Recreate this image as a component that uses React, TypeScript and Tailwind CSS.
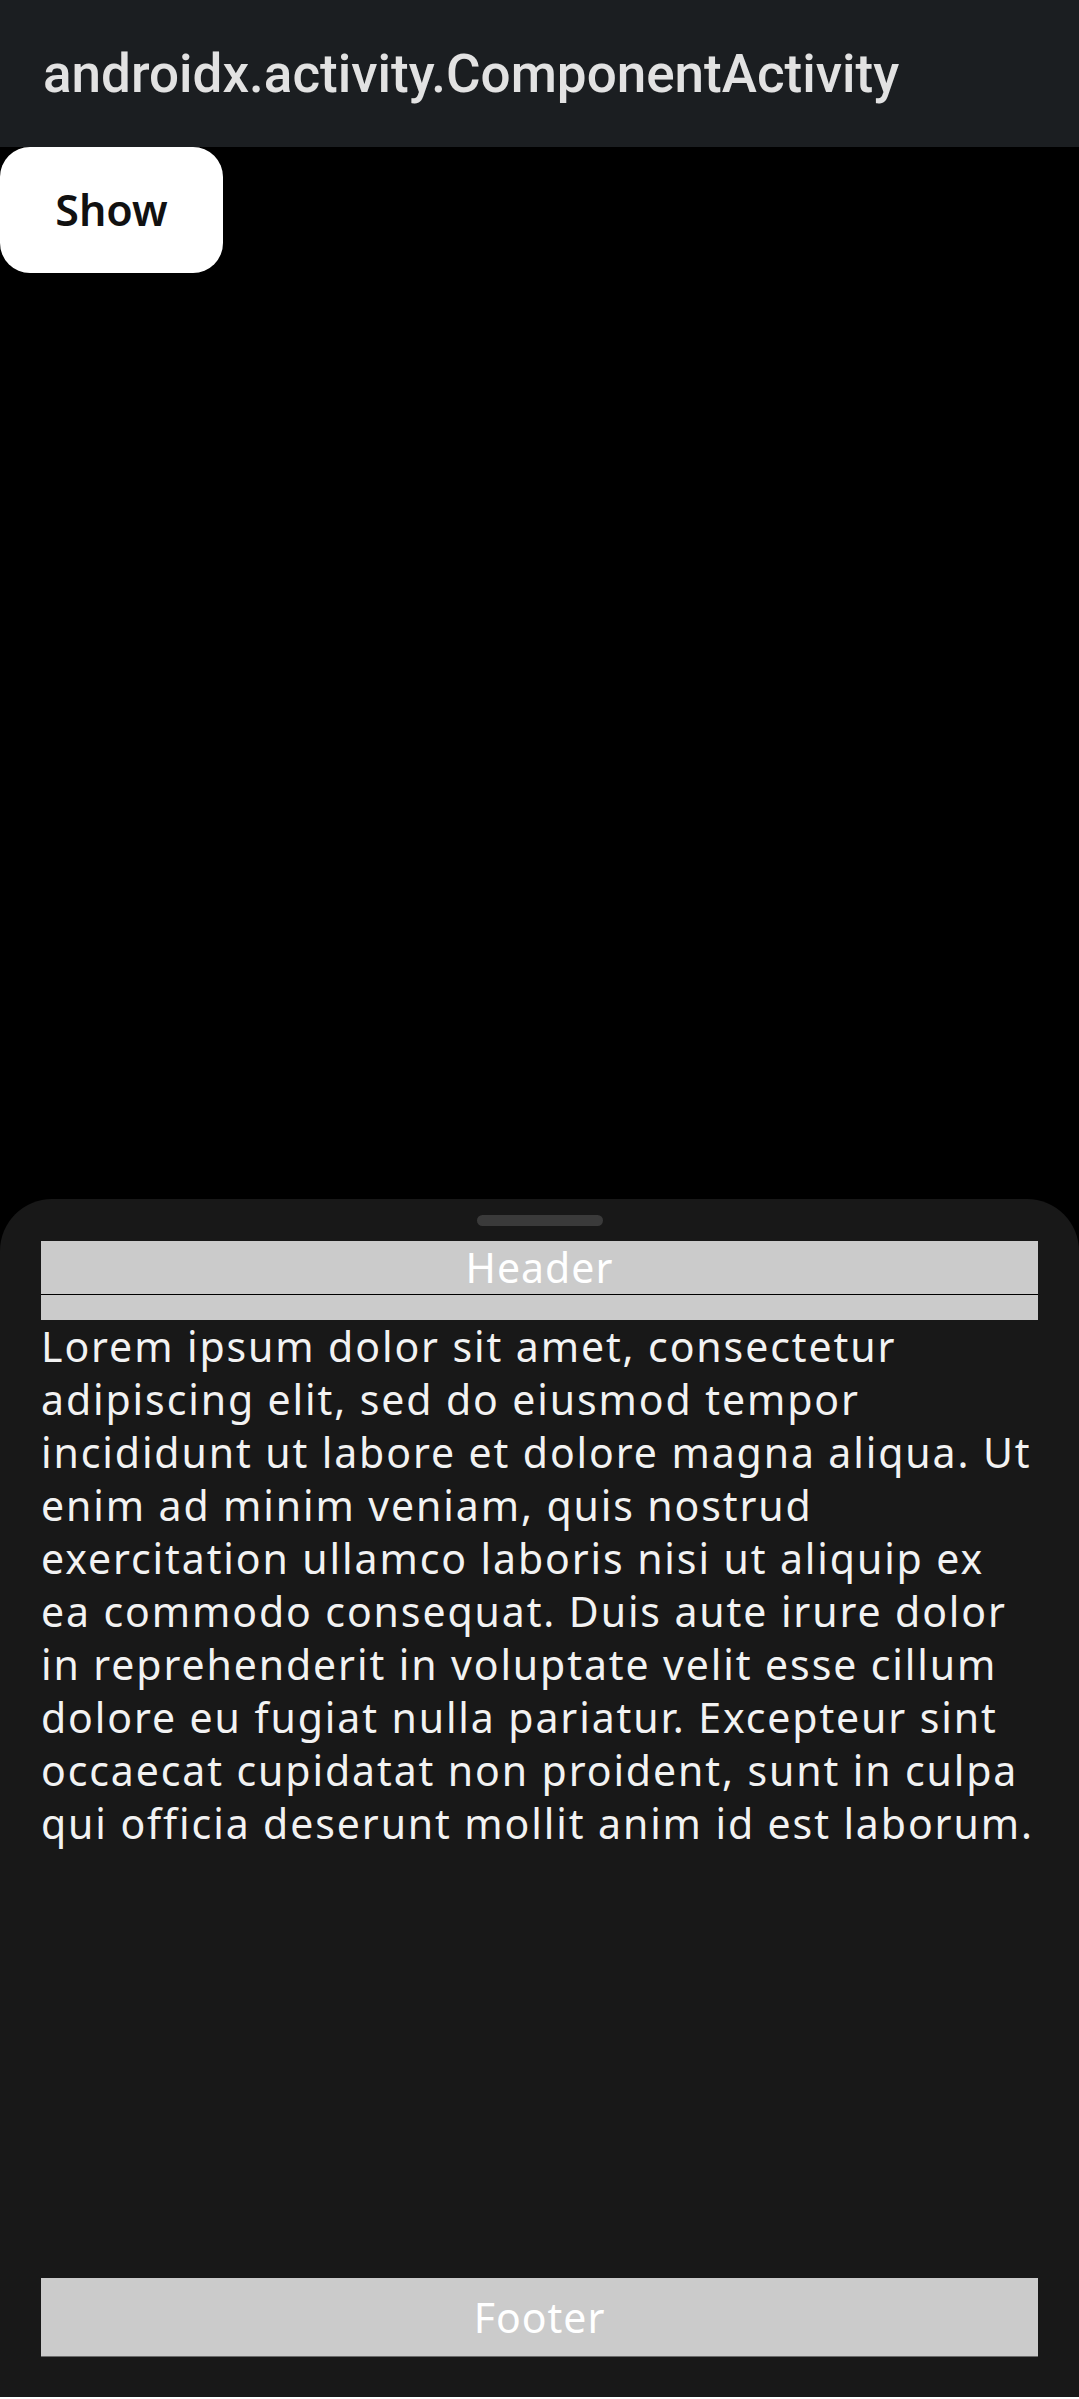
const LOREM =
  'Lorem ipsum dolor sit amet, consectetur adipiscing elit, sed do eiusmod tempor incididunt ut labore et dolore magna aliqua. Ut enim ad minim veniam, quis nostrud exercitation ullamco laboris nisi ut aliquip ex ea commodo consequat. Duis aute irure dolor in reprehenderit in voluptate velit esse cillum dolore eu fugiat nulla pariatur. Excepteur sint occaecat cupidatat non proident, sunt in culpa qui officia deserunt mollit anim id est laborum.';

export default function App() {
  return (
    <div className="w-[1079px] h-[2397px] flex flex-col bg-black font-['Noto_Sans',sans-serif]">
      {/* Toolbar */}
      <header className="h-[147px] shrink-0 bg-[#1b1e21] flex items-center px-[43px]">
        <h1 className="font-['Roboto',sans-serif] font-medium text-[53px] text-[#e2e2e2] leading-none pt-[2px]">
          androidx.activity.ComponentActivity
        </h1>
      </header>

      {/* Content */}
      <div className="flex-1 flex flex-col items-start">
        <button className="w-[223px] h-[126px] bg-white rounded-[30px] flex items-center justify-center text-[43px] font-semibold text-[#111] leading-none pb-[2px]">
          Show
        </button>
      </div>

      {/* Bottom sheet */}
      <section className="h-[1198px] shrink-0 bg-[#181818] rounded-t-[52px] flex flex-col items-center px-[41px] pb-[40px]">
        <div className="mt-[16px] w-[126px] h-[11px] rounded-full bg-[#3a3a3a]" />

        <div className="mt-[15px] w-full flex flex-col">
          <div className="h-[53px] bg-[#cbcbcb] flex items-center justify-center text-white text-[41px] tracking-[1px] leading-none">
            Header
          </div>
          <div className="h-px bg-black" />
          <div className="h-[25px] bg-[#cbcbcb]" />
        </div>

        <p className="w-full text-[41px] leading-[53px] tracking-[1.9px] text-[#f2f2f2]">{LOREM}</p>

        <div className="flex-1" />

        <div className="w-full flex flex-col">
          <div className="h-[78px] bg-[#cbcbcb] flex items-center justify-center text-white text-[41px] tracking-[1px] leading-none">
            Footer
          </div>
          <div className="h-px bg-[#6a6a6a]" />
        </div>
      </section>
    </div>
  );
}
